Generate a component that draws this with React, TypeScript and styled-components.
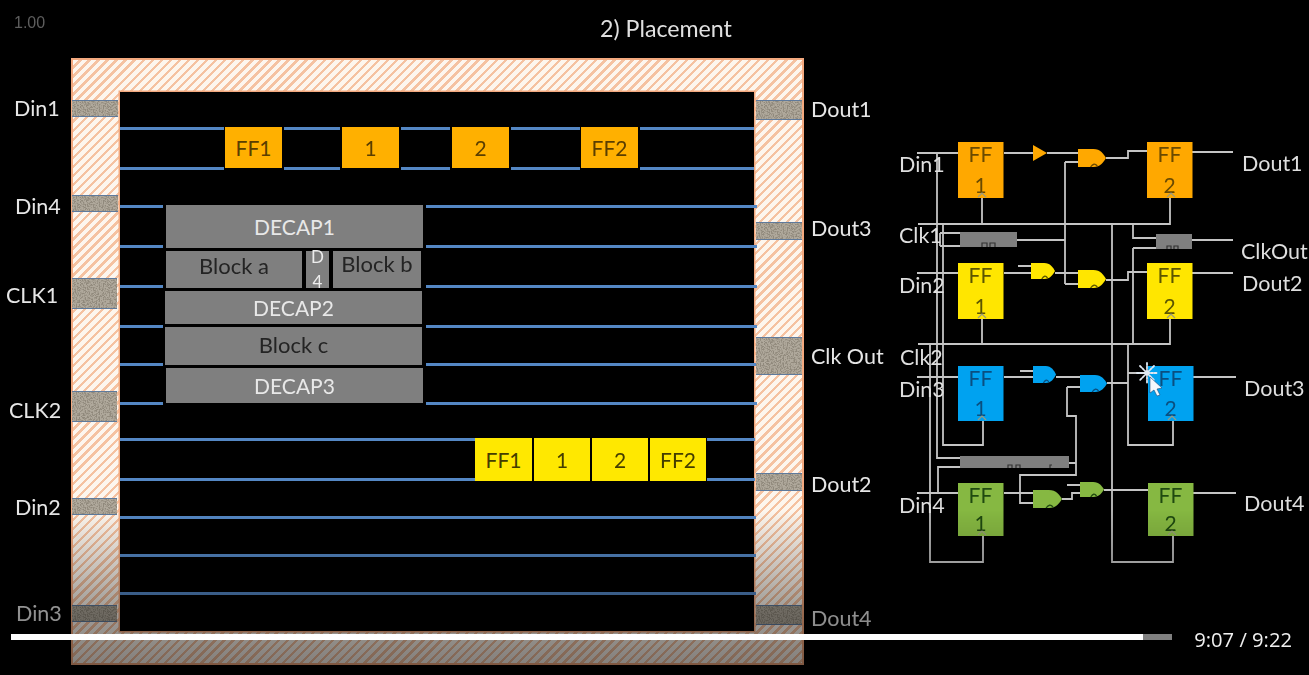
import React from "react";
import styled, { createGlobalStyle } from "styled-components";

const Global = createGlobalStyle`
  html, body { margin: 0; padding: 0; background: #000; }
  body { width: 1309px; height: 675px; overflow: hidden; }
`;

const SLIDE_FONT = `Lato, "Open Sans", "Liberation Sans", sans-serif`;

const Page = styled.div`
  position: relative;
  width: 1309px;
  height: 675px;
  background: #000;
  overflow: hidden;
`;
const Slide = styled.div`
  position: relative;
  height: 675px;
  font-family: ${SLIDE_FONT};
  filter: blur(0.45px);
`;
const Title = styled.h1`
  margin: 0;
  height: 58px;
  padding: 14px 0 0 600px;
  box-sizing: border-box;
  font-size: 23.2px;
  line-height: 28px;
  font-weight: 400;
  color: #e0e0e0;
`;
const Stage = styled.div`
  display: flex;
  align-items: flex-start;
`;
const Frame = styled.div`
  position: relative;
  flex: none;
  box-sizing: border-box;
  width: 733px;
  height: 607px;
  margin-left: 71px;
  padding: 32px 47px;
  border: 2px solid #f3a97f;
  background: repeating-linear-gradient(
    135deg,
    #fdf6ee 0 4px,
    #f5c2a1 4px 6.4px
  );
`;
const Die = styled.div`
  position: relative;
  box-sizing: border-box;
  width: 634px;
  height: 539px;
  background: #000;
  box-shadow: 0 0 0 1.5px #f3a97f;
`;
const Rail = styled.div<{ $x: number; $y: number; $w: number }>`
  position: absolute;
  left: ${(p) => p.$x - 120}px;
  top: ${(p) => p.$y - 93.5}px;
  width: ${(p) => p.$w}px;
  height: 3.5px;
  background: #5487c4;
`;
const Cell = styled.div<{ $x: number; $y: number; $w: number; $h: number; $fill: string; $ink: string; $size?: number; $up?: number }>`
  position: absolute;
  left: ${(p) => p.$x - 120}px;
  top: ${(p) => p.$y - 92}px;
  width: ${(p) => p.$w}px;
  height: ${(p) => p.$h}px;
  box-sizing: border-box;
  padding-bottom: ${(p) => p.$up ?? 0}px;
  display: flex;
  align-items: center;
  justify-content: center;
  background: ${(p) => p.$fill};
  color: ${(p) => p.$ink};
  font-size: ${(p) => p.$size ?? 21}px;
`;
const StackedCell = styled(Cell)`
  flex-direction: column;
  justify-content: space-between;
  font-size: 17px;
  line-height: 12px;
`;
const Pin = styled.div<{ $x: number; $y: number; $w: number; $h: number }>`
  position: absolute;
  left: ${(p) => p.$x - 73}px;
  top: ${(p) => p.$y - 60}px;
  width: ${(p) => p.$w}px;
  height: ${(p) => p.$h}px;
  background: #b0a99c;
  border-top: 1px solid #5f7a9c;
  border-bottom: 1px solid #5f7a9c;
  box-sizing: border-box;
  svg { display: block; width: 100%; height: 100%; }
`;
const PinLabel = styled.span<{ $x: number; $y: number }>`
  position: absolute;
  left: ${(p) => p.$x}px;
  top: ${(p) => p.$y - 13}px;
  font-size: 21.5px;
  line-height: 26px;
  color: #e6e6e6;
  white-space: nowrap;
`;
const Schematic = styled.svg`
  flex: none;
  display: block;
  width: 429px;
  height: 445px;
  margin: 72px 0 0 76px;
  font-family: ${SLIDE_FONT};
`;
const Fade = styled.div`
  position: absolute;
  left: 0;
  right: 0;
  bottom: 0;
  height: 165px;
  background: linear-gradient(to bottom, rgba(0,0,0,0), rgba(0,0,0,0.36) 60%, rgba(0,0,0,0.5));
  pointer-events: none;
`;
const SpeedTag = styled.div`
  position: absolute;
  left: 14px;
  top: 14px;
  font: 16px/18px "Liberation Sans", Arial, sans-serif;
  color: #5e5e5e;
`;
const Controls = styled.div`
  position: absolute;
  left: 11px;
  right: 17px;
  top: 627px;
  height: 24px;
  display: flex;
  align-items: center;
  gap: 22px;
`;
const Track = styled.div`
  flex: 1;
  height: 6px;
  margin-top: -4px;
  background: #808080;
`;
const Played = styled.div`
  height: 100%;
  background: #fff;
`;
const Time = styled.div`
  font: 20.2px/24px "Open Sans", "Liberation Sans", sans-serif;
  color: #f0f0f0;
  white-space: nowrap;
`;

type R = [number, number, number];
const rails: R[] = [
  ...[128, 168].flatMap((y): R[] => [
    [120, y, 104], [284, y, 56], [401, y, 49], [511, y, 69], [640, y, 114],
  ]),
  ...[206, 246, 286, 326, 364, 403].flatMap((y): R[] => [
    [120, y, 43], [426, y, 331],
  ]),
  [120, 439, 355], [707, 439, 48],
  [120, 479, 355], [707, 479, 48],
  [120, 517, 636], [120, 555, 636], [120, 593, 636],
];

const ORANGE = "#ffb000";
const YELLOW = "#ffe800";
const GREY = "#7f7f7f";
const cells: { x: number; y: number; w: number; h: number; fill: string; ink: string; t: string; size?: number; up?: number }[] = [
  { x: 225, y: 127, w: 57, h: 41, fill: ORANGE, ink: "#5a3e00", t: "FF1" },
  { x: 342, y: 127, w: 57, h: 41, fill: ORANGE, ink: "#5a3e00", t: "1" },
  { x: 452, y: 127, w: 57, h: 41, fill: ORANGE, ink: "#5a3e00", t: "2" },
  { x: 581, y: 127, w: 57, h: 41, fill: ORANGE, ink: "#5a3e00", t: "FF2" },
  { x: 475, y: 438, w: 57, h: 43, fill: YELLOW, ink: "#443d00", t: "FF1" },
  { x: 534, y: 438, w: 56, h: 43, fill: YELLOW, ink: "#443d00", t: "1" },
  { x: 592, y: 438, w: 56, h: 43, fill: YELLOW, ink: "#443d00", t: "2" },
  { x: 650, y: 438, w: 56, h: 43, fill: YELLOW, ink: "#443d00", t: "FF2" },
  { x: 166, y: 205, w: 257, h: 43, fill: GREY, ink: "#e8e8e8", t: "DECAP1" },
  { x: 166, y: 251, w: 136, h: 37, fill: GREY, ink: "#242424", t: "Block a", size: 22, up: 8 },
  { x: 333, y: 251, w: 88, h: 37, fill: GREY, ink: "#242424", t: "Block b", size: 22, up: 12 },
  { x: 165, y: 291, w: 257, h: 33, fill: GREY, ink: "#e8e8e8", t: "DECAP2" },
  { x: 165, y: 327, w: 257, h: 38, fill: GREY, ink: "#242424", t: "Block c", size: 22, up: 4 },
  { x: 166, y: 368, w: 257, h: 35, fill: GREY, ink: "#e8e8e8", t: "DECAP3" },
];

const pins: [number, number, number, number][] = [
  [72, 100, 46, 17], [72, 195, 46, 17], [72, 278, 45, 31], [72, 391, 45, 31], [72, 498, 45, 17], [72, 605, 45, 17],
  [756, 100, 46, 20], [756, 222, 46, 18], [756, 337, 46, 38], [756, 473, 46, 18], [756, 605, 46, 20],
];

const pinLabels: [string, number, number][] = [
  ["Din1", 14, 108], ["Din4", 15, 206], ["CLK1", 6, 295], ["CLK2", 9, 410], ["Din2", 15, 507], ["Din3", 16, 613],
  ["Dout1", 811, 109], ["Dout3", 811, 228], ["Clk Out", 811, 356], ["Dout2", 811, 484], ["Dout4", 811, 618],
];

const wires = [
  "M917 153H958M1004 153H1033M1047 153H1078M1106 158H1128V151H1147M1192 152H1233",
  "M937 153V458H960M917 273H958M917 377H958M917 493H958",
  "M943 224V445H983V421M930 345V562H983V536",
  "M960 467H938V493",
  "M918 224H1170V198M982 224V198M918 344H1170V319M982 344V319",
  "M940 233V246M940 233H960M940 246H960M1017 240H1065M1065 162V284M1065 162H1078M1065 284H1078",
  "M1004 273H1031M1018 266H1031M1055 273H1078M1106 280H1128V272H1147M1192 273H1233",
  "M1192 240H1233M1133 224V238H1156M1133 248H1156M1133 248V344",
  "M1112 224V562H1173V536M1128 345V445H1173V421",
  "M1004 377H1033M1020 371H1033M1056 377H1080M1067 387H1080M1067 387V416H1076V475H1020V503H1033",
  "M1107 383H1128M1128 373H1148M1193 377H1236",
  "M1004 493H1033M1062 499H1072V493H1080M1067 485H1080M1104 490H1148M1193 493H1236M1069 463H1076",
];

const flops: [number, number, number, string, string, string][] = [
  [958, 142, 56, "#ffa800", "#6a4a00", "1"],
  [1147, 142, 56, "#ffa800", "#6a4a00", "2"],
  [958, 263, 56, "#ffe600", "#5c5600", "1"],
  [1147, 263, 56, "#ffe600", "#5c5600", "2"],
  [958, 366, 55, "#00a2f0", "#0a4f80", "1"],
  [1148, 366, 55, "#00a2f0", "#0a4f80", "2"],
  [958, 483, 53, "#86b842", "#1f4a10", "1"],
  [1148, 483, 53, "#86b842", "#1f4a10", "2"],
];

const gate = (x: number, y: number, w: number, h: number) =>
  `M${x} ${y}H${x + w * 0.55}C${x + w * 0.8} ${y} ${x + w * 0.92} ${y + h * 0.28} ${x + w} ${y + h / 2}C${x + w * 0.92} ${y + h * 0.72} ${x + w * 0.8} ${y + h} ${x + w * 0.55} ${y + h}H${x}Z`;

const gates: [number, number, number, number, string, string][] = [
  [1078, 149, 28, 18, "#ffa800", "#6a4a00"],
  [1078, 270, 28, 18, "#ffe600", "#5c5600"],
  [1031, 263, 24, 16, "#ffe600", "#5c5600"],
  [1033, 366, 23, 17, "#00a2f0", "#0a4f80"],
  [1080, 375, 27, 17, "#00a2f0", "#0a4f80"],
  [1033, 490, 29, 18, "#86b842", "#1f4a10"],
  [1080, 482, 24, 15, "#86b842", "#1f4a10"],
];

const schematicLabels: [string, number, number][] = [
  ["Din1", 899, 165], ["Clk1", 899, 236], ["Din2", 899, 286], ["Clk2", 900, 358], ["Din3", 899, 390], ["Din4", 899, 506],
  ["Dout1", 1242, 164], ["ClkOut", 1241, 252], ["Dout2", 1242, 284], ["Dout3", 1244, 389], ["Dout4", 1244, 504],
];

const PLAYED_PCT = ((1144 - 11) / (1173 - 11)) * 100;

export default function App() {
  return (
    <Page>
      <Global />
      <svg width="0" height="0" style={{ position: "absolute" }} aria-hidden="true">
        <filter id="grain" x="0" y="0" width="100%" height="100%">
          <feTurbulence type="fractalNoise" baseFrequency="0.7" numOctaves="2" seed="4" />
          <feColorMatrix type="matrix" values="0 0 0 0 0.28  0 0 0 0 0.25  0 0 0 0 0.2  5 0 0 0 -2.2" />
        </filter>
      </svg>
      <Slide>
        <Title>2) Placement</Title>
        <Stage>
          <Frame>
            <Die>
              {rails.map(([x, y, w], i) => (
                <Rail key={i} $x={x} $y={y} $w={w} />
              ))}
              {cells.map((c, i) => (
                <Cell key={i} $x={c.x} $y={c.y} $w={c.w} $h={c.h} $fill={c.fill} $ink={c.ink} $size={c.size} $up={c.up}>
                  {c.t}
                </Cell>
              ))}
              <StackedCell $x={306} $y={251} $w={23} $h={37} $fill={GREY} $ink="#ececec">
                <span>D</span>
                <span>4</span>
              </StackedCell>
            </Die>
            {pins.map(([x, y, w, h], i) => (
              <Pin key={i} $x={x} $y={y} $w={w} $h={h}>
                <svg>
                  <rect width="100%" height="100%" filter="url(#grain)" />
                </svg>
              </Pin>
            ))}
          </Frame>
          <Schematic viewBox="880 130 429 445">
            <g fill="none" stroke="#c4c4c4" strokeWidth="1.8">
              {wires.map((d, i) => (
                <path key={i} d={d} />
              ))}
            </g>
            <rect x="960" y="232" width="57" height="15" fill="#7f7f7f" />
            <path d="M982 247V243H987V247M990 247V243H995V247" fill="none" stroke="#333" strokeWidth="1.2" />
            <rect x="1156" y="234" width="36" height="15" fill="#7f7f7f" />
            <path d="M1167 249V246H1171V249M1174 249V246H1178V249" fill="none" stroke="#333" strokeWidth="1.2" />
            <rect x="960" y="456" width="109" height="12" fill="#7f7f7f" />
            <path d="M1008 468V465H1012V468M1016 468V465H1020V468M1050 468V465H1052" fill="none" stroke="#333" strokeWidth="1.2" />
            <path d="M1033 145L1047 153L1033 161Z" fill="#ffa800" />
            {gates.map(([x, y, w, h, c, ink], i) => (
              <g key={i}>
                <path d={gate(x, y, w, h)} fill={c} />
                <path d={`M${x + w * 0.45} ${y + h}q${w * 0.12} -5 ${w * 0.24} -1`} fill="none" stroke={ink} strokeWidth="1.3" />
              </g>
            ))}
            {flops.map(([x, y, h, c, ink, b], i) => (
              <g key={i}>
                <rect x={x} y={y} width={45.5} height={h} fill={c} />
                <text x={x + 22.5} y={y + 20} fontSize="21" textAnchor="middle" fill={ink}>FF</text>
                <text x={x + 22.5} y={y + h - 5} fontSize="21" textAnchor="middle" fill={ink}>{b}</text>
                <path d={`M${x + 20} ${y + h - 1}L${x + 24} ${y + h - 5}L${x + 28} ${y + h - 1}`} fill="none" stroke="#9a9a80" strokeWidth="1.2" />
              </g>
            ))}
            {schematicLabels.map(([t, x, y]) => (
              <text key={t} x={x} y={y + 7} fontSize="21.5" fill="#dedede">{t}</text>
            ))}
            <path d="M1147 363V383M1137 373H1157M1140 366L1154 380M1154 366L1140 380" stroke="#dfe8f2" strokeWidth="1.8" strokeLinecap="round" strokeDasharray="2 1.5" />
            <path d="M1150 377V393L1154 390L1157 396L1160 395L1157 389L1162 388Z" fill="#f4f8fc" stroke="#1b4a78" strokeWidth="0.6" />
          </Schematic>
        </Stage>
        {pinLabels.map(([t, x, y]) => (
          <PinLabel key={t} $x={x} $y={y}>{t}</PinLabel>
        ))}
      </Slide>
      <Fade />
      <SpeedTag>1.00</SpeedTag>
      <Controls>
        <Track>
          <Played style={{ width: `${PLAYED_PCT}%` }} />
        </Track>
        <Time>9:07 / 9:22</Time>
      </Controls>
    </Page>
  );
}
